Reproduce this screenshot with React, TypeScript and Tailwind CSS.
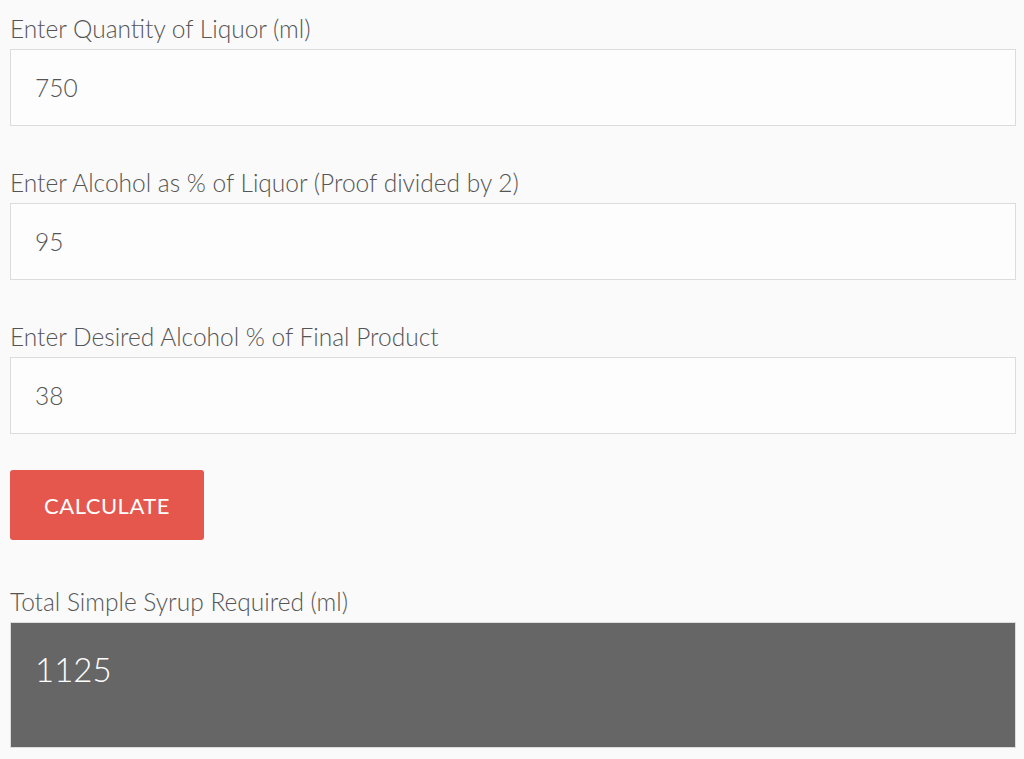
import { useState } from "react";

const fields = [
  { label: "Enter Quantity of Liquor (ml)", value: "750" },
  { label: "Enter Alcohol as % of Liquor (Proof divided by 2)", value: "95" },
  { label: "Enter Desired Alcohol % of Final Product", value: "38" },
];

export default function App() {
  const [values, setValues] = useState(fields.map((f) => f.value));

  return (
    <div className="min-h-[759px] w-full bg-[#fafafa] px-[10px] pt-[12px] font-['Lato',sans-serif] text-[#555]">
      {fields.map((f, i) => (
        <div key={f.label} className="mb-[40px]">
          <label className="mb-[4px] block text-[24.5px] font-light leading-[33px] text-[#555]">
            {f.label}
          </label>
          <input
            type="text"
            value={values[i]}
            onChange={(e) => {
              const next = [...values];
              next[i] = e.target.value;
              setValues(next);
            }}
            className="block h-[77px] w-[1006px] border border-[#dcdcdc] bg-[#fdfdfd] px-[24px] text-[24.5px] font-light text-[#555] outline-none"
          />
        </div>
      ))}

      <button
        type="button"
        className="-mt-[4px] h-[70px] w-[194px] rounded-[3px] bg-[#e5574c] font-['Lato',sans-serif] text-[22px] tracking-[0.5px] text-white"
      >
        CALCULATE
      </button>

      <div className="mt-[45px]">
        <label className="mb-[4px] block text-[24.5px] font-light leading-[33px] text-[#555]">
          Total Simple Syrup Required (ml)
        </label>
        <div className="h-[126px] w-[1006px] border border-[#dcdcdc] bg-[#666] px-[24px] pt-[22px] text-[33px] font-light text-white">
          1125
        </div>
      </div>
    </div>
  );
}
